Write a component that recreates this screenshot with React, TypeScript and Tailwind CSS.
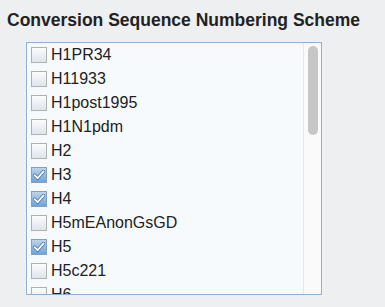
import React from 'react';

const items: { label: string; checked: boolean }[] = [
  { label: 'H1PR34', checked: false },
  { label: 'H11933', checked: false },
  { label: 'H1post1995', checked: false },
  { label: 'H1N1pdm', checked: false },
  { label: 'H2', checked: false },
  { label: 'H3', checked: true },
  { label: 'H4', checked: true },
  { label: 'H5mEAnonGsGD', checked: false },
  { label: 'H5', checked: true },
  { label: 'H5c221', checked: false },
  { label: 'H6', checked: false },
];

function Box({ checked }: { checked: boolean }) {
  if (checked) {
    return (
      <span className="w-4 h-4 shrink-0 border border-[#8a9fb5] bg-gradient-to-b from-[#bcd5ee] to-[#6fa3d6] flex items-center justify-center">
        <svg width="14" height="14" viewBox="0 0 14 14">
          <path d="M2.5 7.2 L5.6 10.2 L11.6 3.4" fill="none" stroke="#3570ab" strokeWidth="3.2" strokeLinecap="round" strokeLinejoin="round" />
          <path d="M2.5 7.2 L5.6 10.2 L11.6 3.4" fill="none" stroke="#ffffff" strokeWidth="1.8" strokeLinecap="round" strokeLinejoin="round" />
        </svg>
      </span>
    );
  }
  return <span className="w-4 h-4 shrink-0 border border-[#b0b0b0] bg-gradient-to-b from-[#fbfcfd] to-[#dde5ee]" />;
}

export default function App() {
  return (
    <div className="w-[385px] h-[307px] bg-[#eeeff1] font-['Liberation_Sans',Arial,sans-serif] text-[#1e1e1e] pt-[10px]">
      <h2 className="pl-[7px] text-[17.5px] leading-[20px] font-bold text-[#222]">Conversion Sequence Numbering Scheme</h2>
      <div className="ml-[26px] mt-[12px] w-[296px] h-[253px] border border-[#8fb2d4] bg-[#f6fafd] flex overflow-hidden">
        <ul className="flex-1 pl-1">
          {items.map((it) => (
            <li key={it.label} className="h-6 flex items-center gap-[4px] text-[16px] text-[#222]">
              <Box checked={it.checked} />
              <span>{it.label}</span>
            </li>
          ))}
        </ul>
        <div className="w-[18px] shrink-0 border-l border-[#e4e6e8] bg-[#fafafa] flex justify-center">
          <div className="mt-[3px] w-[10px] h-[89px] rounded-full bg-[#c6c6c6]" />
        </div>
      </div>
    </div>
  );
}
